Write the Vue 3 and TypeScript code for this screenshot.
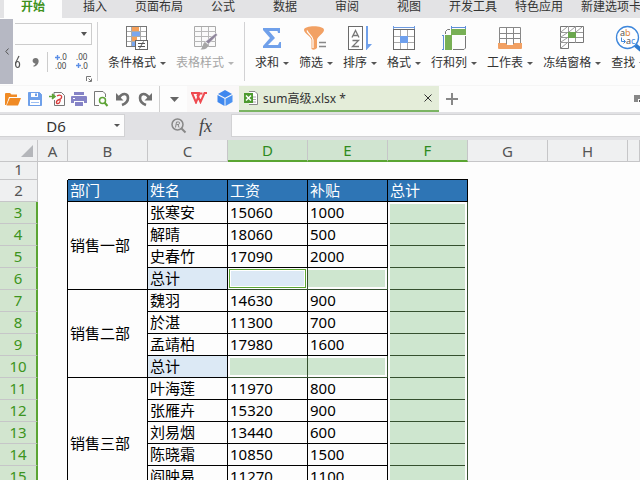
<script setup lang="ts">
import { ref } from 'vue'

interface Tool {
  id: string
  label: string
  disabled?: boolean
}

interface SheetRow {
  n: number
  dept?: string
  span?: number
  name: string
  pay: string
  extra: string
  total?: boolean
}

const tabs: string[] = ['开始', '插入', '页面布局', '公式', '数据', '审阅', '视图', '开发工具', '特色应用', '新建选项卡']
const activeTab = ref('开始')

const styleTools: Tool[] = [
  { id: 'cond', label: '条件格式' },
  { id: 'style', label: '表格样式', disabled: true },
]
const editTools: Tool[] = [
  { id: 'sum', label: '求和' },
  { id: 'filter', label: '筛选' },
  { id: 'sort', label: '排序' },
  { id: 'format', label: '格式' },
  { id: 'rowcol', label: '行和列' },
  { id: 'sheet', label: '工作表' },
  { id: 'freeze', label: '冻结窗格' },
  { id: 'find', label: '查找' },
]
const toolGroups: Tool[][] = [styleTools, editTools]

const quick: string[] = ['open', 'save', 'pdf', 'print', 'preview', 'undo', 'redo']

const columns: string[] = ['A', 'B', 'C', 'D', 'E', 'F', 'G', 'H', '']
const selectedColumns: string[] = ['D', 'E', 'F']

const rows: SheetRow[] = [
  { n: 3, dept: '销售一部', span: 4, name: '张寒安', pay: '15060', extra: '1000' },
  { n: 4, name: '解晴', pay: '18060', extra: '500' },
  { n: 5, name: '史春竹', pay: '17090', extra: '2000' },
  { n: 6, name: '总计', pay: '', extra: '', total: true },
  { n: 7, dept: '销售二部', span: 4, name: '魏羽', pay: '14630', extra: '900' },
  { n: 8, name: '於湛', pay: '11300', extra: '700' },
  { n: 9, name: '孟靖柏', pay: '17980', extra: '1600' },
  { n: 10, name: '总计', pay: '', extra: '', total: true },
  { n: 11, dept: '销售三部', span: 6, name: '叶海莲', pay: '11970', extra: '800' },
  { n: 12, name: '张雁卉', pay: '15320', extra: '900' },
  { n: 13, name: '刘易烟', pay: '13440', extra: '600' },
  { n: 14, name: '陈晓霜', pay: '10850', extra: '1500' },
  { n: 15, name: '阎映易', pay: '11270', extra: '1100' },
  { n: 16, name: '', pay: '', extra: '' },
]
</script>

<template>
  <div class="app">
    <nav class="tabs">
      <button v-for="t in tabs" :key="t" type="button" class="tab" :class="{ active: t === activeTab }" @click="activeTab = t">{{ t }}</button>
    </nav>

    <section class="ribbon">
      <button type="button" class="handle" aria-label="向左滚动">
        <svg width="4" height="7" viewBox="0 0 4 7"><path d="M3.5 .5L.8 3.5L3.5 6.5" fill="none" stroke="#555" /></svg>
      </button>
      <div class="number-group">
        <div class="combo">
          <select aria-label="数字格式"><option></option></select>
          <svg class="combo-arrow" width="6" height="4" viewBox="0 0 6 4"><path d="M0 0H6L3 4Z" fill="#555" /></svg>
        </div>
        <div class="number-tools">
          <button type="button" class="percent" aria-label="百分比">
            <svg width="6" height="14" viewBox="0 0 6 14"><path d="M4 1L-2 13" stroke="#555" stroke-width="1.2" /><ellipse cx="2.6" cy="9.5" rx="2" ry="3" fill="none" stroke="#555" stroke-width="1.2" /></svg>
          </button>
          <button type="button" aria-label="千位分隔">
            <svg width="8" height="9" viewBox="0 0 8 9"><path d="M3.5 0C6 0 7 1.8 6.6 4C6.2 6.6 4 8.300 1.5 8.800V7.400C2.700 7 3.400 6.200 3.500 5.400C1.800 5.600 .6 4.400 .6 2.800C.6 1.200 1.800 0 3.5 0Z" fill="#777" /></svg>
          </button>
          <i class="mini-sep"></i>
          <button type="button" aria-label="增加小数位数">
            <svg class="dec" width="14" height="18" viewBox="0 0 14 18"><path d="M0 4.5H5M2.5 2V7" stroke="#5b8ee6" stroke-width="1.4" /><text x="5" y="7">.0</text><text x="0" y="16">.00</text></svg>
          </button>
          <button type="button" aria-label="减少小数位数">
            <svg class="dec" width="14" height="18" viewBox="0 0 14 18"><text x="0" y="7">.00</text><path d="M0 12.5H5M2.5 10V15" stroke="#5b8ee6" stroke-width="1.4" /><text x="5" y="16">.0</text></svg>
          </button>
        </div>
        <button type="button" class="launcher" aria-label="单元格格式">
          <svg width="6" height="6" viewBox="0 0 6 6"><path d="M.5 5V.5H5M5.5 2.5V5.5H2.5M2.5 2.5L5 5" fill="none" stroke="#777" /></svg>
        </button>
      </div>

      <template v-for="(group, g) in toolGroups" :key="g">
        <i class="group-sep"></i>
        <div class="tool-group">
          <button v-for="t in group" :key="t.id" type="button" class="tool" :disabled="t.disabled">
            <svg width="24" height="24" viewBox="0 0 24 24" fill="none">
              <template v-if="t.id === 'cond'">
                <rect x="1.5" y=".5" width="20" height="20" fill="#fff" />
                <path d="M1 5.5H22M1 10.5H22M1 15.5H22M6.5 1V21M15.5 1V21" stroke="#aaa" />
                <path d="M7 1h7v4H7ZM7 11h5v4H7Z" fill="#f5a05a" />
                <path d="M7 6h8v4H7ZM7 16h3v4H7Z" fill="#7ba7ee" />
                <rect x="1.5" y=".5" width="20" height="20" stroke="#777" />
                <rect x="10.5" y="14.5" width="12" height="9" fill="#fff" stroke="#666" />
                <path d="M13 17.5H20M13 20.5H20M18.5 15.5L14.5 22.5" stroke="#555" />
              </template>
              <template v-else-if="t.id === 'style'">
                <path d="M1.5 .5H22.5V20.5H1.5Z" fill="#fafafa" stroke="#aaa" />
                <path d="M1 5.5H23M1 10.5H23M1 15.5H23M8.5 1V21M15.5 1V21" stroke="#b8b8b8" />
                <path d="M23 7L24.5 9L15.500 18L12.500 15.500Z" fill="#8f869b" stroke="#fff" stroke-width=".5" />
                <path d="M12 16L15.500 19C14.500 22.500 12 24 7.500 23.500C10 22 9.500 17 12 16Z" fill="#a6a6a6" />
              </template>
              <path v-else-if="t.id === 'sum'" d="M3 2H20V7H18L17.5 5H9L15 12L8 19H18L19.5 16H21V22H3V20L10 12L3 4Z" fill="#70a0ea" />
              <template v-else-if="t.id === 'filter'">
                <path d="M0 4C0-1 20-1 20 4C20 7 13 11 13 14V22Q10 25 7.5 23V14C7.5 11 0 7 0 4Z" fill="#f2a164" />
                <path d="M3 4.500C4 8 9 10 9 14V22" stroke="#fff" stroke-width="1.2" />
                <path d="M15 16.5H22M15 20.5H22" stroke="#888" stroke-width="1.5" />
              </template>
              <template v-else-if="t.id === 'sort'">
                <rect x=".5" y=".5" width="14" height="23" fill="#fff" stroke="#6b6b6b" />
                <path d="M4 11.5L7.5 4.5L11 11.5M5 9.5H10M4.5 14.5H10.5L4.5 20.5H11" stroke="#777" stroke-width="1.3" />
                <path d="M18 0H20V18H24L18.5 24L18 24Z" fill="#70a0ea" />
              </template>
              <template v-else-if="t.id === 'format'">
                <path d="M1.5 0V3M22.5 0V3M1 1.5H23" stroke="#6d9ae0" />
                <rect x="1.5" y="3.5" width="21" height="20" fill="#fff" />
                <path d="M8.5 4V24M15.5 4V24M1 10.5H23M1 16.5H23" stroke="#aaa" />
                <rect x="8" y="10" width="8" height="7" fill="#6fa0ed" />
                <rect x="1.5" y="3.5" width="21" height="20" stroke="#6b6b6b" />
              </template>
              <template v-else-if="t.id === 'rowcol'">
                <path d="M9.5 0V3M23.5 0V3M9 1.5H24M0 9.5H2M0 23.5H2M1.5 9V24" stroke="#5f8fd8" />
                <path d="M9 3H24V9H10V24H3V9H9Z" fill="#78b056" />
                <path d="M3.5 8V5.5L5.5 3.5H8M23.5 10V22L22 23.5H11" stroke="#777" />
              </template>
              <template v-else-if="t.id === 'sheet'">
                <path d="M0 17H24V22Q24 23 23 23H1Q0 23 0 22Z" fill="#f2a164" />
                <path d="M1.5 1.5H22.5V17H15V19H9V17H1.5Z" fill="#fff" />
                <path d="M1.5 17V1.5H22.5V17M8.5 2V18M15.5 2V18M1 7.5H23M1 12.5H23" stroke="#888" />
              </template>
              <template v-else-if="t.id === 'freeze'">
                <path d="M.5 .5H23.5V16.5H8.5V22.5H.5Z" fill="#fff" stroke="#777" />
                <path d="M0 6.5H23M0 11.5H23M0 16.5H9M8.5 0V17M15.5 0V17" stroke="#999" />
                <path d="M1 6L7 1M9 6L15 1M16 6L22 1M1 11L7 7M1 16L7 12M1 22L7 17" stroke="#999" />
                <rect x="8" y="6" width="8" height="6" fill="#6ba64e" />
              </template>
              <template v-else>
                <path d="M18.5 18.5L25 24" stroke="#2f7cd0" stroke-width="4" />
                <circle cx="11.5" cy="11.5" r="11" fill="#fff" stroke="#3f87db" stroke-width="1.3" />
                <g class="find-text"><text x="4" y="10">a</text><text x="9" y="10" fill="#e0853c">b</text><text x="10" y="18">a</text><text x="15" y="18" fill="#3f87db">c</text></g>
                <path d="M5.5 11.5V15.5H9M7.5 13.5L9.5 15.5L7.5 17.5" stroke="#3f87db" />
              </template>
            </svg>
            <span class="tool-label">{{ t.label }}<i class="caret"></i></span>
          </button>
        </div>
      </template>
    </section>

    <section class="docbar">
      <div class="quick">
        <button v-for="q in quick" :key="q" type="button" :aria-label="q">
          <svg width="16" height="16" viewBox="0 0 16 16" fill="none">
            <path v-if="q === 'open'" d="M0 14V3Q0 2 1 2H5L6.5 3.5H12V6H4L1.3 14ZM4.8 7H16L13 14.5H1.5Z" fill="#f08a24" />
            <template v-else-if="q === 'save'">
              <path d="M1.5 1.5H12.5L14.5 3.5V14.5H1.5Z" fill="#6fa0ea" stroke="#6fa0ea" />
              <path d="M4 2H11V6H4ZM3 9H13V14H3Z" fill="#fff" /><path d="M8 2.5H10V5H8Z" fill="#6fa0ea" /><path d="M4 11.5H12" stroke="#9dbff2" />
            </template>
            <template v-else-if="q === 'pdf'">
              <path d="M5 4V1.5H12.5L15.5 4.5V14.5H5.5V9" stroke="#777" />
              <path d="M0 5.5H4M3 3L6 5.5L3 8" fill="#5da336" stroke="#5da336" stroke-width="1.6" />
              <path d="M8 5C11 3 14 5 12 7.5C10 9 6.5 9 7.5 12C9 14 12 11.5 11 8" stroke="#d83a3a" stroke-width="1.3" />
            </template>
            <template v-else-if="q === 'print'">
              <path d="M3 1H13V4H3ZM0 6Q0 5 1 5H15Q16 5 16 6V12H13V10H3V12H0ZM4 11H12V15H4Z" fill="#8583c6" />
              <path d="M2 7.5H4" stroke="#fff" />
            </template>
            <template v-else-if="q === 'preview'">
              <path d="M6 14.5H1.5V.5H10L12.500 3V6" stroke="#777" /><circle cx="9.5" cy="9.5" r="3" stroke="#5da336" stroke-width="1.5" /><path d="M11.5 11.5L14.5 15" stroke="#5da336" stroke-width="2" />
            </template>
            <template v-else-if="q === 'undo'">
              <path d="M1 2V9.500H8.500Z" fill="#707070" /><path d="M4 7C7 1.500 13 2 13 7C13 10 11 12.500 7 14" stroke="#707070" stroke-width="2.6" />
            </template>
            <template v-else>
              <path d="M15 2V9.500H7.500Z" fill="#707070" /><path d="M12 7C9 1.500 3 2 3 7C3 10 5 12.500 9 14" stroke="#707070" stroke-width="2.6" />
            </template>
          </svg>
        </button>
      </div>
      <button type="button" class="more" aria-label="自定义快速访问工具栏"><svg width="9" height="5" viewBox="0 0 9 5"><path d="M0 0H9L4.5 5Z" fill="#666" /></svg></button>
      <div class="brands">
        <a href="#" aria-label="WPS">
          <svg width="16" height="12" viewBox="0 0 16 12"><path d="M0 1H7.5L6.5 3.5L9.5 10L13.5 1H16M1 1L5 10.5L8.5 1.5H11.5" fill="none" stroke="#ef4a50" stroke-width="2" /></svg>
        </a>
        <a href="#" aria-label="云文档">
          <svg width="16" height="16" viewBox="0 0 16 16"><path d="M8 0L15 4L8 7.700L1 4Z" fill="#3f87ee" /><path d="M.5 5L7.5 8.700V16L.5 12Z" fill="#3f87ee" /><path d="M15.5 5L8.5 8.700V16L15.500 12Z" fill="#4b92f2" /></svg>
        </a>
      </div>
      <div class="doc">
        <svg width="16" height="16" viewBox="0 0 16 16" fill="none"><path d="M6 1.5H12L14.5 4V14.5H6" fill="#fff" stroke="#8a8a8a" /><path d="M10 7H13M10 9.5H13M10 12H13" stroke="#a8a8a8" /><path d="M1 3H10V13H1Z" fill="#4c9a2e" /><path d="M3 5.5L8 10.5M8 5.5L3 10.5" stroke="#fff" stroke-width="1.5" /></svg>
        <span class="doc-name">sum高级.xlsx *</span>
        <button type="button" aria-label="关闭"><svg width="8" height="8" viewBox="0 0 8 8"><path d="M.5 .5L7.5 7.5M7.5 .5L.5 7.5" stroke="#333" /></svg></button>
      </div>
      <button type="button" class="add" aria-label="新建"><svg width="12" height="12" viewBox="0 0 12 12"><path d="M0 6H12M6 0V12" stroke="#888" stroke-width="2" /></svg></button>
      <button type="button" class="windows" aria-label="窗口列表"><svg width="6" height="8" viewBox="0 0 6 8"><path d="M0 0H6V4H4V7H0Z" fill="#888" /><path d="M5 5H6V7H5Z" fill="#555" /></svg></button>
    </section>

    <section class="formula">
      <div class="namebox">
        <input aria-label="名称框" value="D6" />
        <i class="caret"></i>
      </div>
      <div class="fx">
        <button type="button" aria-label="浏览公式结果"><svg width="16" height="16" viewBox="0 0 16 16" fill="none"><circle cx="6.5" cy="6.5" r="5.5" stroke="#888" stroke-width="1.5" /><path d="M10.5 10.5L14.5 14.5" stroke="#888" stroke-width="2" /><path d="M4.5 9.5L5.5 4H7.5Q9 4 8.5 5.5Q8.300 6.5 7 6.5H5.5M7 6.5L8 9.5" stroke="#888" /></svg></button>
        <button type="button" class="fx-label">fx</button>
      </div>
      <input class="formula-input" aria-label="编辑栏" />
    </section>

    <main class="sheet">
      <table>
        <colgroup>
          <col class="w-head" /><col class="w-a" /><col v-for="i in 7" :key="i" class="w-col" /><col />
        </colgroup>
        <thead>
          <tr>
            <th class="corner"><svg width="12" height="12" viewBox="0 0 12 12"><path d="M12 0V12H0Z" fill="#b4b6ba" /></svg></th>
            <th v-for="c in columns" :key="c" scope="col" :class="{ on: selectedColumns.includes(c) }">{{ c }}</th>
          </tr>
        </thead>
        <tbody>
          <tr class="first">
            <th scope="row">1</th>
            <td></td><td v-for="i in 5" :key="i" class="top-edge"></td><td colspan="3"></td>
          </tr>
          <tr class="titles">
            <th scope="row">2</th>
            <td class="edge"></td>
            <td>部门</td><td>姓名</td><td>工资</td><td>补贴</td><td>总计</td>
            <td class="blank" colspan="3"></td>
          </tr>
          <tr v-for="r in rows" :key="r.n" class="data">
            <th scope="row" class="on">{{ r.n }}</th>
            <td class="edge"></td>
            <td v-if="r.dept" :rowspan="r.span" class="cell">{{ r.dept }}</td>
            <td class="cell" :class="{ total: r.total }">{{ r.name }}</td>
            <td v-if="r.n === 6" class="cell pick active-pick"><div></div></td>
            <td v-else-if="r.total" class="cell pick start-pick"><div></div></td>
            <td v-else class="cell">{{ r.pay }}</td>
            <td v-if="r.total" class="cell pick end-pick"><div></div></td>
            <td v-else class="cell">{{ r.extra }}</td>
            <td class="cell column-pick"><div></div></td>
            <td colspan="3"></td>
          </tr>
        </tbody>
      </table>
    </main>
  </div>
</template>

<style>
body {
  margin: 0;
  overflow: hidden;
}
</style>

<style scoped>
.app {
  height: 100vh;
  overflow: hidden;
  display: flex;
  flex-direction: column;
  background: #fdfdfd;
  color: #333;
  font: 12px/16px "Noto Sans", "Noto Sans CJK SC", sans-serif;
}
.app * {
  box-sizing: border-box;
}
button {
  border: 0;
  padding: 0;
  background: none;
  color: inherit;
  font: inherit;
  white-space: nowrap;
}
svg {
  display: block;
  flex: none;
}
input,
select {
  border: 0;
  margin: 0;
  outline: 0;
  border-radius: 0;
  font: inherit;
  color: inherit;
}
.caret {
  display: block;
  flex: none;
  width: 6px;
  border: 3px solid transparent;
  border-top-color: #555;
  border-bottom: 0;
}
.tabs {
  flex: none;
  display: flex;
  height: 18px;
  padding-left: 2px;
  background: #e3e3e5;
  overflow: hidden;
}
.tab {
  flex: none;
  min-width: 62px;
  padding: 0 9px 4px;
  line-height: 14px;
}
.tab.active {
  border: solid #e3e3e5;
  border-width: 0 2px;
  padding: 0 7px 4px;
  background: #fdfdfd;
  color: #3e921c;
  font-weight: 600;
}
.ribbon {
  flex: none;
  display: flex;
  height: 67px;
  overflow: hidden;
}
.handle {
  flex: none;
  width: 13px;
  height: 65px;
  margin-top: 1px;
  display: grid;
  place-items: center;
  background: #b6b8c3;
}
.number-group {
  flex: none;
  width: 84px;
  padding: 5px 5px 0 2px;
  display: flex;
  flex-direction: column;
}
.combo {
  display: flex;
  align-items: center;
  height: 22px;
  padding-right: 4px;
  border: 1px solid #ccc;
  border-left: 0;
}
.combo select {
  flex: 1;
  min-width: 0;
  height: 100%;
  appearance: none;
  background: transparent;
}
.number-tools {
  display: flex;
  align-items: center;
  gap: 7px;
  height: 20px;
  margin-top: 7px;
}
.number-tools .percent {
  margin-right: 4px;
}
.mini-sep {
  width: 1px;
  height: 20px;
  background: #ccc;
}
.dec {
  font-size: 8px;
  fill: #444;
  overflow: visible;
}
.launcher {
  align-self: flex-end;
  margin-top: 4px;
}
.group-sep {
  flex: none;
  width: 1px;
  height: 59px;
  margin-top: 4px;
  background: #d2d2d4;
}
.tool-group {
  flex: none;
  display: flex;
  gap: 10px;
  padding: 8px 10px 0;
}
.tool {
  flex: none;
  display: flex;
  flex-direction: column;
  align-items: center;
  gap: 5px;
}
.tool svg {
  overflow: visible;
}
.tool-label {
  display: flex;
  align-items: center;
  gap: 4px;
}
.tool:disabled {
  color: #a5a5a5;
}
.tool:disabled .caret {
  border-top-color: #b5b5b5;
}
.find-text {
  font-size: 9px;
  fill: #555;
}
.docbar {
  flex: none;
  display: flex;
  height: 27px;
  border-top: 1px solid #f6f6f6;
}
.quick {
  display: flex;
  padding-left: 2px;
}
.quick button {
  width: 22px;
  display: grid;
  place-items: center;
}
.more {
  width: 29px;
  display: grid;
  place-items: center;
  border-left: 1px solid #d0d0d0;
  margin-left: 3px;
  margin-right: -1px;
}
.brands {
  display: flex;
  align-items: center;
  gap: 10px;
  padding: 0 6px 2px 4px;
  background: #faf8f8;
}
.doc {
  flex: none;
  width: 200px;
  display: flex;
  align-items: center;
  gap: 4px;
  padding: 0 7px 0 4px;
  background: #e4edd9;
  border-bottom: 2px solid #7bb463;
}
.doc-name {
  flex: 1;
  padding-top: 2px;
}
.add {
  margin-left: 7px;
}
.windows {
  margin-left: auto;
}
.formula {
  flex: none;
  display: flex;
  height: 28px;
  padding: 2px 0 3px;
  background: #e1e1e4;
}
.namebox {
  flex: none;
  width: 125px;
  display: flex;
  align-items: center;
  padding-right: 4px;
  background: #fdfdfd;
  border: solid #d2d2d4;
  border-width: 1px 1px 1px 0;
}
.namebox input {
  flex: 1;
  min-width: 0;
  padding: 0 2px 0 0;
  background: transparent;
  text-align: center;
  font-size: 15px;
  line-height: 20px;
}
.fx {
  flex: none;
  width: 106px;
  display: flex;
  align-items: center;
  justify-content: flex-end;
  gap: 12px;
  padding-right: 19px;
}
.fx-label {
  color: #444;
  font: italic 18px/20px "Liberation Serif", serif;
}
.formula-input {
  flex: 1;
  min-width: 0;
  padding: 0 4px;
  background: #fdfdfd;
  border: 1px solid #d2d2d4;
  border-right: 0;
}
.sheet {
  flex: 1;
  min-height: 0;
  overflow: hidden;
}
table {
  width: 100%;
  table-layout: fixed;
  border-collapse: separate;
  border-spacing: 0;
  font-size: 15px;
  line-height: 18px;
}
.w-head {
  width: 38px;
}
.w-a {
  width: 30px;
}
.w-col {
  width: 80px;
}
tr {
  height: 22px;
}
.first {
  height: 18px;
}
.first th {
  line-height: 15px;
}
th,
td {
  padding: 0 0 2px;
  white-space: nowrap;
}
th {
  background: #eff0f1;
  border: solid #c6c6c8;
  border-width: 0 1px 1px 0;
  color: #555;
  font-weight: 400;
}
thead th {
  padding: 0;
}
thead th.on {
  background: #d0e4d0;
  border-bottom: 2px solid #5aa532;
  color: #2e8b1e;
}
tbody th.on {
  background: #d2e5cf;
  border-right: 2px solid #5aa532;
  color: #3c9420;
}
.corner svg {
  margin: 1px 4px 0 auto;
}
.top-edge {
  border-bottom: 1px solid #000;
}
.edge {
  border-right: 1px solid #000;
}
.titles td:not(.edge, .blank) {
  padding-left: 2px;
  background: #2e75b5;
  border: solid #000;
  border-width: 0 1px 1px 0;
  color: #fff;
}
.cell {
  padding-left: 2px;
  border: solid #000;
  border-width: 0 1px 1px 0;
  color: #000;
}
.cell.total {
  background: #dce9f5;
}
.cell.pick {
  padding: 2px 0;
  border-color: #35502f;
}
.cell.pick div {
  height: 17px;
  background: #cee6cf;
}
.cell.start-pick div {
  margin-left: 2px;
}
.cell.end-pick div {
  margin-right: 2px;
}
.cell.active-pick {
  padding: 1px;
}
.cell.active-pick div {
  height: 19px;
  background: #dce9f5;
  border: 1px solid #5aa532;
  box-shadow: inset 0 0 0 1px #fff;
}
.cell.column-pick {
  padding: 0 2px;
  border-color: #35502f;
  border-bottom: 0;
}
.column-pick div {
  height: 22px;
  background: #cee6cf;
  border-bottom: 1px solid #35502f;
}
.titles + .data .column-pick div {
  height: 20px;
  margin-top: 2px;
}
</style>
